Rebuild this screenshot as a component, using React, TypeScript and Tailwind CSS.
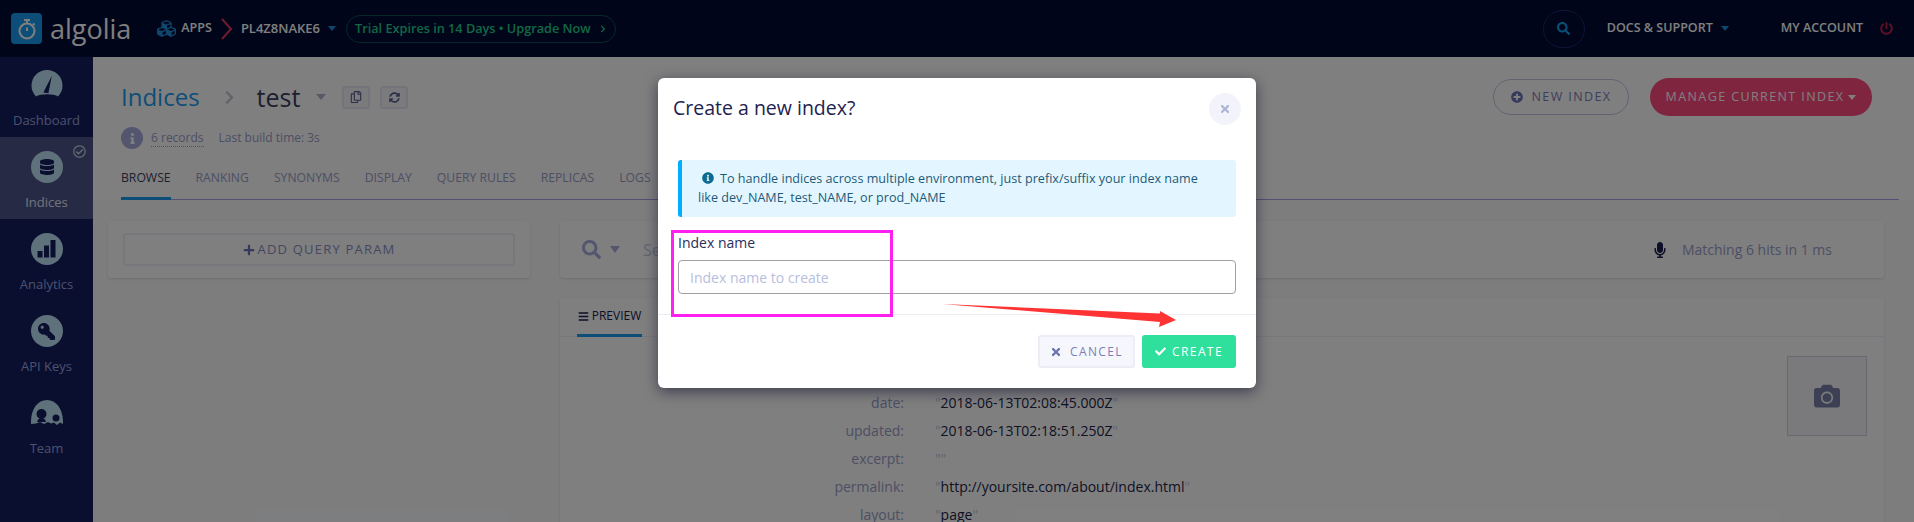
import React from 'react';
import {
  FaBars,
  FaCamera,
  FaCheck,
  FaChevronRight,
  FaCubes,
  FaDatabase,
  FaInfo,
  FaInfoCircle,
  FaKey,
  FaMicrophone,
  FaPlus,
  FaPlusCircle,
  FaPowerOff,
  FaRegCheckCircle,
  FaRegCopy,
  FaSearch,
  FaSyncAlt,
  FaTimes,
} from 'react-icons/fa';

const tabs = [
  { label: 'BROWSE', active: true },
  { label: 'RANKING' },
  { label: 'SYNONYMS' },
  { label: 'DISPLAY' },
  { label: 'QUERY RULES' },
  { label: 'REPLICAS' },
  { label: 'LOGS' },
];

const rows = [
  { key: 'title', value: 'About', hidden: true },
  { key: 'date', value: '2018-06-13T02:08:45.000Z' },
  { key: 'updated', value: '2018-06-13T02:18:51.250Z' },
  { key: 'excerpt', value: '' },
  { key: 'permalink', value: 'http://yoursite.com/about/index.html' },
  { key: 'layout', value: 'page' },
];

function Caret({ className }: { className: string }) {
  return <span className={`inline-block h-0 w-0 border-x-[4px] border-t-[5px] border-x-transparent ${className}`} />;
}

function GaugeIcon() {
  return (
    <svg viewBox="0 0 32 32" className="h-[32px] w-[32px]">
      <path d="M5 27.5A15.5 15.5 0 1 1 27 27.5C23 24.6 9 24.6 5 27.5Z" fill="#bfe3f5" />
      <path d="M12.4 23.4 20.8 6.8 17.4 24.2Z" fill="#141e60" />
    </svg>
  );
}

function BarsIcon() {
  return (
    <svg viewBox="0 0 32 32" className="h-[32px] w-[32px]">
      <circle cx="16" cy="16" r="16" fill="#bfe3f5" />
      <rect x="6.5" y="18" width="5" height="6.5" fill="#141e60" />
      <rect x="13" y="12.5" width="5" height="12" fill="#141e60" />
      <rect x="19.5" y="7" width="5" height="17.5" fill="#141e60" />
    </svg>
  );
}

function TeamIcon() {
  return (
    <svg viewBox="0 0 32 26" className="h-[26px] w-[32px]">
      <path d="M0 24C-.5 10 6 0 16 0s16.500 10 16 24l-3 -1.500-3 2.500-3-2.500-3 1-3-1.500-4 2-4-2-4 1.500Z" fill="#bfe3f5" />
      <circle cx="10.500" cy="14" r="5" fill="#141e60" />
      <path d="M6 22c1-3 2-4 4.500-4s3.500 1 4.500 4Z" fill="#141e60" />
      <circle cx="25" cy="18" r="3.500" fill="#141e60" />
    </svg>
  );
}

function NavItem({ icon, label, active }: { icon: React.ReactNode; label: string; active?: boolean }) {
  return (
    <div className={`relative flex h-[82px] flex-col items-center pt-[14px] ${active ? 'bg-[#4e5588]' : ''}`}>
      <div className="flex h-[32px] items-center justify-center">{icon}</div>
      <span className={`mt-[10px] text-[13px] leading-[18px] ${active ? 'text-[#e4e8fa]' : 'text-[#98a2de]'}`}>{label}</span>
      {active && <FaRegCheckCircle className="absolute right-[7px] top-[8px] text-[13px] text-[#c9d6e6]" />}
    </div>
  );
}

function CircleGlyph({ children }: { children: React.ReactNode }) {
  return (
    <div className="flex h-[32px] w-[32px] items-center justify-center rounded-full bg-[#bfe3f5] text-[#141e60]">{children}</div>
  );
}

function Header() {
  return (
    <header className="flex h-[57px] items-center bg-[#000a32] pl-[11px] pr-[21px]">
      <div className="flex h-[31px] w-[31px] items-center justify-center rounded-[4px] bg-[#1a9cf0]">
        <svg viewBox="0 0 24 24" className="h-[24px] w-[24px]" fill="none" stroke="#fff" strokeWidth="2">
          <circle cx="12" cy="14" r="7.500" />
          <path d="M9 3h6M12 3v3M12 14V10.500M18 6.500l1.500 1.500" />
        </svg>
      </div>
      <span className="ml-[8px] text-[27px] font-medium leading-none text-white">algolia</span>
      <FaCubes className="ml-[26px] text-[19px] text-[#1e8ede]" />
      <span className="ml-[5px] text-[12.500px] font-semibold text-white">APPS</span>
      <svg viewBox="0 0 12 22" className="ml-[9px] h-[22px] w-[12px]" fill="none" stroke="#e0385f" strokeWidth="2">
        <path d="M1 1 10 11 1 21" />
      </svg>
      <span className="ml-[8px] text-[13px] font-semibold text-white">PL4Z8NAKE6</span>
      <Caret className="ml-[8px] border-t-[#1e8ede]" />
      <div className="ml-[10px] flex h-[28px] w-[270px] items-center rounded-full border border-[#0c4f50] pl-[8px] text-[12.700px] font-semibold text-[#20d08c]">
        Trial Expires in 14 Days • Upgrade Now
        <FaChevronRight className="ml-[8px] text-[8px]" />
      </div>
      <div className="ml-auto flex h-[38px] w-[42px] items-center justify-center rounded-full border border-[#1a2a70] text-[#10a0f0]">
        <FaSearch className="text-[13px]" />
      </div>
      <span className="ml-[22px] text-[12.500px] font-semibold text-white">DOCS &amp; SUPPORT</span>
      <Caret className="ml-[8px] border-t-[#1e8ede]" />
      <span className="ml-[52px] text-[12.500px] font-semibold text-white">MY ACCOUNT</span>
      <FaPowerOff className="ml-[17px] text-[13px] text-[#b81e48]" />
    </header>
  );
}

function Sidebar() {
  return (
    <aside className="flex w-[93px] shrink-0 flex-col bg-[#141e60]">
      <div className="-mt-[2px]">
        <NavItem icon={<GaugeIcon />} label="Dashboard" />
      </div>
      <NavItem active icon={<CircleGlyph><FaDatabase className="text-[16px]" /></CircleGlyph>} label="Indices" />
      <NavItem icon={<BarsIcon />} label="Analytics" />
      <NavItem icon={<CircleGlyph><FaKey className="text-[17px] -scale-x-100" /></CircleGlyph>} label="API Keys" />
      <NavItem icon={<TeamIcon />} label="Team" />
    </aside>
  );
}

function TitleBar() {
  return (
    <div className="bg-white pl-[28px] pr-[42px]">
      <div className="flex h-[70px] items-start">
        <div className="flex h-[80px] items-center">
          <span className="text-[24px] leading-none text-[#1a9cf0]">Indices</span>
          <FaChevronRight className="ml-[22px] text-[15px] text-[#c4c8d8]" />
          <span className="ml-[20px] text-[25px] leading-none text-[#3a3f5c]">test</span>
          <Caret className="ml-[16px] border-x-[5.500px] border-t-[6px] border-t-[#aeb2c8]" />
          <div className="ml-[16px] flex h-[23px] w-[28px] items-center justify-center rounded-[3px] border-2 border-[#e6e8f4] bg-[#f6f7fc] text-[#5a6090]">
            <FaRegCopy className="text-[12px]" />
          </div>
          <div className="ml-[10px] flex h-[23px] w-[28px] items-center justify-center rounded-[3px] border-2 border-[#e6e8f4] bg-[#f6f7fc] text-[#5a6090]">
            <FaSyncAlt className="text-[11px]" />
          </div>
        </div>
        <div className="ml-auto flex items-center gap-[21px] pt-[21px]">
          <div className="flex h-[36px] w-[136px] items-center justify-center rounded-full border border-[#c0c4e4] text-[12.500px] tracking-[1.400px] text-[#7a80b8]">
            <FaPlusCircle className="mr-[9px] text-[12px] text-[#6a72b8]" />
            NEW INDEX
          </div>
          <div className="flex h-[38px] w-[222px] items-center justify-center rounded-full bg-[#ff4a7e] text-[12.500px] tracking-[1.400px] text-white">
            MANAGE CURRENT INDEX
            <Caret className="ml-[4px] border-t-white" />
          </div>
        </div>
      </div>
      <div className="flex h-[22px] items-center text-[12px] text-[#9a9ec8]">
        <span className="flex h-[22px] w-[22px] items-center justify-center rounded-full bg-[#a6acdc] text-white">
          <FaInfo className="text-[11px]" />
        </span>
        <span className="ml-[8px] border-b border-dotted border-[#9a9ec8] leading-[16px]">6 records</span>
        <span className="ml-[15px]">Last build time: 3s</span>
      </div>
      <div className="-mr-[27px] mt-[18px] flex h-[33px] gap-[25px] border-b border-[#a6a0e6] text-[12.200px] font-medium text-[#9a9ec8]">
        {tabs.map((tab) => (
          <div
            key={tab.label}
            className={`-mb-[1px] h-[33px] pt-[2px] leading-[18px] ${tab.active ? 'border-b-[3px] border-[#1a9cf0] text-[#3a3f5c]' : ''}`}
          >
            {tab.label}
          </div>
        ))}
      </div>
    </div>
  );
}

function Content() {
  return (
    <div className="flex gap-[30px] pl-[15px] pr-[30px] pt-[21px]">
      <div className="h-[57px] w-[422px] shrink-0 rounded-[3px] bg-white px-[15px] py-[12px] shadow-[0_1px_3px_rgba(0,0,0,0.12)]">
        <div className="flex h-[33px] items-center justify-center rounded-[3px] border-2 border-[#eceef6] text-[13px] tracking-[1.200px] text-[#8a8fc4]">
          <FaPlus className="mr-[3px] text-[12px] text-[#6a72b8]" />
          ADD QUERY PARAM
        </div>
      </div>
      <div className="flex min-w-0 flex-1 flex-col gap-[20px]">
        <div className="flex h-[57px] items-center rounded-[3px] bg-white pl-[22px] pr-[52px] shadow-[0_1px_3px_rgba(0,0,0,0.12)]">
          <FaSearch className="text-[19px] text-[#a6acdc]" />
          <Caret className="ml-[9px] border-x-[5.500px] border-t-[7px] border-t-[#a6acdc]" />
          <span className="ml-[23px] text-[16px] text-[#c4c8e4]">Search...</span>
          <FaMicrophone className="ml-auto text-[16px] text-[#1a2050]" />
          <span className="ml-[14px] text-[14px] text-[#9a9ec8]">Matching 6 hits in 1 ms</span>
        </div>
        <div className="rounded-[3px] bg-white shadow-[0_1px_3px_rgba(0,0,0,0.12)]">
          <div className="flex h-[39px] border-b border-[#eef0f6] pl-[17px]">
            <div className="flex h-[39px] w-[65px] items-center justify-center border-b-[3px] border-[#1a9cf0] text-[12px] text-[#1a2050]">
              <FaBars className="mr-[3px] text-[11px]" />
              PREVIEW
            </div>
          </div>
          <div className="flex justify-between pb-[20px] pl-0 pr-[17px] pt-[19px]">
            <div className="pt-[5px] text-[14px] leading-[28px]">
              {rows.map((row) => (
                <div key={row.key} className="flex">
                  <span className="w-[344px] text-right text-[#9a9ec8]">{row.key}:</span>
                  <span className="ml-[31px] text-[#c4c8e4]">
                    "<span className="text-[#22264a]">{row.value}</span>"
                  </span>
                </div>
              ))}
            </div>
            <div className="flex h-[80px] w-[80px] items-center justify-center border border-[#d0d2dc] bg-[#f4f5f9] text-[#7a80a8]">
              <FaCamera className="text-[26px]" />
            </div>
          </div>
        </div>
      </div>
    </div>
  );
}

function Modal() {
  return (
    <div className="absolute left-[658px] top-[78px] h-[310px] w-[598px] rounded-[6px] bg-white shadow-[0_4px_14px_rgba(20,20,50,0.6)]">
      <div className="flex h-[82px] items-start justify-between pl-[15px] pr-[15px] pt-[15px]">
        <h2 className="text-[19.500px] leading-[30px] text-[#1e2350]">Create a new index?</h2>
        <div className="flex h-[32px] w-[32px] items-center justify-center rounded-full bg-[#f3f4fb] text-[#b0b5d8]">
          <FaTimes className="text-[12px]" />
        </div>
      </div>
      <div className="px-[20px]">
        <div className="h-[57px] rounded-[3px] border-l-[4px] border-[#00aeff] bg-[#e3f6ff] pl-[16px] pt-[9px] text-[12.600px] leading-[19px] text-[#1d5a78]">
          <FaInfoCircle className="ml-[4px] mr-[6px] inline-block text-[12px] text-[#0f6a92] align-[-1px]" />
          To handle indices across multiple environment, just prefix/suffix your index name
          <br />
          like dev_NAME, test_NAME, or prod_NAME
        </div>
        <label className="mt-[16px] block text-[14px] leading-[20px] text-[#2a2f58]">Index name</label>
        <input
          readOnly
          placeholder="Index name to create"
          className="mt-[7px] block h-[34px] w-full rounded-[4px] border border-[#a0a0a0] px-[11px] text-[14px] outline-none placeholder:text-[#b8bedd]"
        />
      </div>
      <div className="mt-[20px] flex h-[75px] justify-end gap-[7px] border-t border-[#ebedf3] pr-[20px] pt-[20px]">
        <div className="flex h-[33px] w-[97px] items-center justify-center rounded-[3px] border-2 border-[#eceef6] bg-[#f6f7fc] text-[12px] tracking-[1.400px] text-[#7a80b5]">
          <FaTimes className="mr-[8px] text-[12px] text-[#6a72b0]" />
          CANCEL
        </div>
        <div className="flex h-[33px] w-[94px] items-center justify-center rounded-[3px] bg-[#2fe09c] text-[12px] tracking-[1.400px] text-white">
          <FaCheck className="mr-[6px] text-[11px]" />
          CREATE
        </div>
      </div>
    </div>
  );
}

export default function App() {
  return (
    <div className="relative h-[522px] w-[1914px] overflow-hidden bg-[#fafbfd] font-['Open_Sans',sans-serif]">
      <Header />
      <div className="flex h-[465px]">
        <Sidebar />
        <main className="min-w-0 flex-1">
          <TitleBar />
          <Content />
        </main>
      </div>

      {/* dim layer under the dialog */}
      <div className="absolute inset-0 bg-black/50" />
      <Modal />

      {/* annotations drawn on top of the screenshot */}
      <div className="absolute left-[671px] top-[230px] h-[87px] w-[222px] border-[3px] border-[#ff1ff0]" />
      <svg className="absolute left-[940px] top-[300px] h-[30px] w-[240px]" viewBox="0 0 240 30">
        <path d="M2 4 220 13.500 220 11 236 20 219 27 220 22Z" fill="#ff3333" />
      </svg>
    </div>
  );
}
